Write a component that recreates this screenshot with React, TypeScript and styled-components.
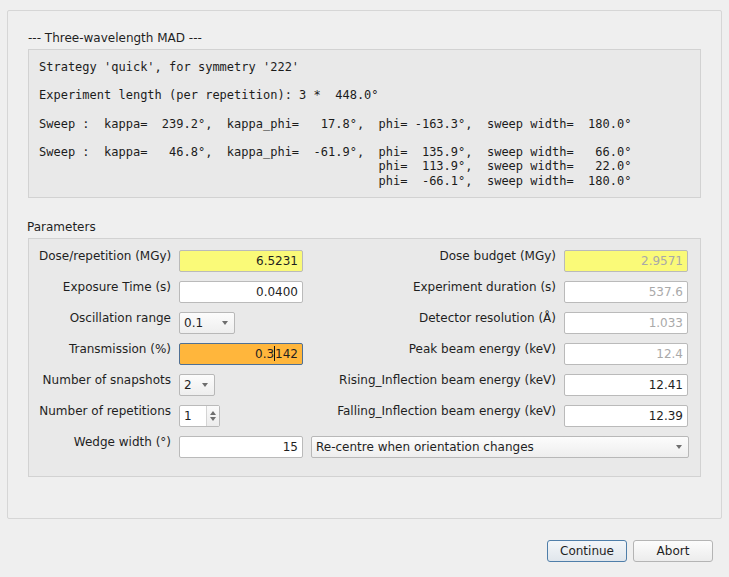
import React from "react";
import styled, { createGlobalStyle } from "styled-components";

const Global = createGlobalStyle`
  html, body { margin: 0; padding: 0; background: #efefef; }
  body { font-family: "DejaVu Sans", "Liberation Sans", sans-serif; font-size: 12px; color: #1f1f1f; }
  * { box-sizing: border-box; }
`;

const Page = styled.div`
  width: 729px;
  height: 577px;
  padding: 10px 7px 0 7px;
  display: flex;
  flex-direction: column;
`;

const Frame = styled.div`
  border: 1px solid #d6d6d6;
  border-radius: 2px;
  background: #efefef;
  padding: 20px 20px 41px 20px;
  display: flex;
  flex-direction: column;
`;

const Caption = styled.div`
  line-height: 14px;
  margin-bottom: 4px;
  white-space: pre;
`;

const Mono = styled.pre`
  margin: 0;
  border: 1px solid #d2d2d2;
  background: #e9e9e9;
  padding: 10px 10px 9px 10px;
  font-family: "DejaVu Sans Mono", "Liberation Mono", monospace;
  font-size: 12px;
  line-height: 14.2px;
  color: #1c1c1c;
`;

const GroupTitle = styled.div`
  margin-top: 22px;
  line-height: 14px;
  margin-bottom: 4px;
  margin-left: -1px;
`;

const Group = styled.div`
  border: 1px solid #d2d2d2;
  background: #e9e9e9;
  padding: 11px 12px 18px 10px;
  display: grid;
  grid-template-columns: 132px 124px 1fr 124px;
  grid-auto-rows: 22px;
  column-gap: 8px;
  row-gap: 9px;
`;

const Label = styled.div`
  text-align: right;
  align-self: start;
  line-height: 13px;
  white-space: nowrap;
  color: #1f1f1f;
`;

const Field = styled.div<{ $bg?: string; $muted?: boolean; $focus?: boolean }>`
  height: 22px;
  border: 1px solid ${(p) => (p.$focus ? "#4f7095" : "#bababa")};
  border-radius: 2px;
  background: ${(p) => p.$bg || "#ffffff"};
  color: ${(p) => (p.$muted ? "#a9a9a9" : "#1f1f1f")};
  padding: 0 4px;
  display: flex;
  align-items: center;
  justify-content: flex-end;
  line-height: 14px;
  white-space: pre;
`;

const Caret = styled.span`
  display: inline-block;
  width: 1px;
  height: 15px;
  background: #111;
  margin: 0 0 0 0;
  vertical-align: middle;
`;

const Combo = styled.div<{ $w?: number; $span?: boolean }>`
  height: 22px;
  width: ${(p) => (p.$w ? `${p.$w}px` : "auto")};
  ${(p) => (p.$span ? "grid-column: 3 / span 2; margin-right: -1px;" : "")}
  border: 1px solid #b8b8b8;
  border-radius: 2px;
  background: linear-gradient(#fcfcfc, #eeeeee);
  padding: 0 6px 0 4px;
  display: flex;
  align-items: center;
  justify-content: space-between;
  line-height: 14px;
  white-space: nowrap;
`;

const Arrow = styled.span`
  width: 0;
  height: 0;
  border-left: 3.5px solid transparent;
  border-right: 3.5px solid transparent;
  border-top: 4px solid #6e6e6e;
  margin-top: 1px;
`;

const Spin = styled.div`
  height: 22px;
  width: 41px;
  border: 1px solid #bababa;
  border-radius: 2px;
  background: #ffffff;
  display: flex;
  align-items: stretch;
`;

const SpinText = styled.div`
  flex: 1;
  padding-left: 4px;
  display: flex;
  align-items: center;
`;

const SpinButtons = styled.div`
  width: 13px;
  border-left: 1px solid #d4d4d4;
  background: linear-gradient(#fafafa, #ececec);
  display: flex;
  flex-direction: column;
  align-items: center;
  justify-content: center;
  gap: 2px;
`;

const Up = styled.span`
  width: 0;
  height: 0;
  border-left: 3px solid transparent;
  border-right: 3px solid transparent;
  border-bottom: 4px solid #6e6e6e;
`;

const Down = styled.span`
  width: 0;
  height: 0;
  border-left: 3px solid transparent;
  border-right: 3px solid transparent;
  border-top: 4px solid #6e6e6e;
`;

const Left = styled.div`
  display: flex;
  align-items: stretch;
`;

const Buttons = styled.div`
  margin-top: 21px;
  display: flex;
  justify-content: flex-end;
  gap: 6px;
  padding-right: 9px;
`;

const Button = styled.div<{ $default?: boolean }>`
  width: 80px;
  height: 22px;
  border: 1px solid ${(p) => (p.$default ? "#4f7ea9" : "#b4b4b4")};
  border-radius: 3px;
  background: ${(p) =>
    p.$default ? "linear-gradient(#f3f6f9, #e0e6ec)" : "linear-gradient(#fcfcfc, #ececec)"};
  display: flex;
  align-items: center;
  justify-content: center;
  line-height: 14px;
  color: #1f1f1f;
`;

const monoText = [
  "Strategy 'quick', for symmetry '222'",
  "",
  "Experiment length (per repetition): 3 *  448.0\u00b0",
  "",
  "Sweep :  kappa=  239.2\u00b0,  kappa_phi=   17.8\u00b0,  phi= -163.3\u00b0,  sweep width=  180.0\u00b0",
  "",
  "Sweep :  kappa=   46.8\u00b0,  kappa_phi=  -61.9\u00b0,  phi=  135.9\u00b0,  sweep width=   66.0\u00b0",
  "                                               phi=  113.9\u00b0,  sweep width=   22.0\u00b0",
  "                                               phi=  -66.1\u00b0,  sweep width=  180.0\u00b0",
].join("\n");

export default function App() {
  return (
    <>
      <Global />
      <Page>
        <Frame>
          <Caption>--- Three-wavelength MAD ---</Caption>
          <Mono>{monoText}</Mono>
          <GroupTitle>Parameters</GroupTitle>
          <Group>
            <Label>Dose/repetition (MGy)</Label>
            <Field $bg="#fafa78">6.5231</Field>
            <Label>Dose budget (MGy)</Label>
            <Field $bg="#fafa78" $muted>2.9571</Field>

            <Label>Exposure Time (s)</Label>
            <Field>0.0400</Field>
            <Label>Experiment duration (s)</Label>
            <Field $muted>537.6</Field>

            <Label>Oscillation range</Label>
            <Left>
              <Combo $w={56}>
                <span>0.1</span>
                <Arrow />
              </Combo>
            </Left>
            <Label>Detector resolution (Å)</Label>
            <Field $muted>1.033</Field>

            <Label>Transmission (%)</Label>
            <Field $bg="#ffb63c" $focus>
              0.3<Caret />142
            </Field>
            <Label>Peak beam energy (keV)</Label>
            <Field $muted>12.4</Field>

            <Label>Number of snapshots</Label>
            <Left>
              <Combo $w={36}>
                <span>2</span>
                <Arrow />
              </Combo>
            </Left>
            <Label>Rising_Inflection beam energy (keV)</Label>
            <Field>12.41</Field>

            <Label>Number of repetitions</Label>
            <Left>
              <Spin>
                <SpinText>1</SpinText>
                <SpinButtons>
                  <Up />
                  <Down />
                </SpinButtons>
              </Spin>
            </Left>
            <Label>Falling_Inflection beam energy (keV)</Label>
            <Field>12.39</Field>

            <Label>Wedge width (°)</Label>
            <Field>15</Field>
            <Combo $span>
              <span>Re-centre when orientation changes</span>
              <Arrow />
            </Combo>
          </Group>
        </Frame>
        <Buttons>
          <Button $default>Continue</Button>
          <Button>Abort</Button>
        </Buttons>
      </Page>
    </>
  );
}
